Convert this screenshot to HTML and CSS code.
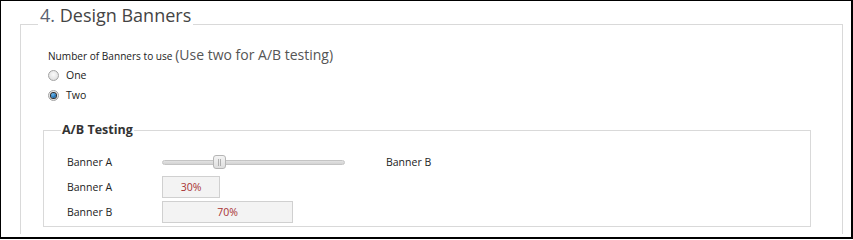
FILE: index.html
```html
<!DOCTYPE html>
<html>
<head>
<meta charset="utf-8">
<link rel="stylesheet" href="styles.css">
</head>
<body>
<div class="frame">
  <div class="viewport">
    <fieldset class="panel">
      <legend class="panel-title"><span class="num">4.</span> Design Banners</legend>
      <div class="options">
        <div class="question">Number of Banners to use <span class="hint">(Use two for A/B testing)</span></div>
        <div class="radio-row"><span class="radio"></span><span class="radio-label">One</span></div>
        <div class="radio-row"><span class="radio checked"></span><span class="radio-label">Two</span></div>
      </div>
      <fieldset class="ab">
        <legend class="ab-title">A/B Testing</legend>
        <div class="row">
          <span class="label">Banner A</span>
          <div class="slider"><div class="track"></div><div class="thumb" style="margin-left: 51px"><i></i><i></i></div></div>
          <span class="label-b">Banner B</span>
        </div>
        <div class="row">
          <span class="label">Banner A</span>
          <div class="box small">30%</div>
        </div>
        <div class="row">
          <span class="label">Banner B</span>
          <div class="box wide">70%</div>
        </div>
      </fieldset>
    </fieldset>
  </div>
</div>
</body>
</html>
```

FILE: styles.css
```css
html, body {
  margin: 0;
  padding: 0;
  background: #fff;
}
.frame {
  width: 853px;
  height: 239px;
  box-sizing: border-box;
  border-style: solid;
  border-color: #000;
  border-width: 1px 2px 2px 1px;
  padding-bottom: 3px;
  background: #fff;
  display: flex;
  flex-direction: column;
  font-family: "Open Sans", "Noto Sans", sans-serif;
  color: #333;
}
.viewport {
  flex: 1;
  overflow: hidden;
}
.panel {
  margin: 4px 0 0 19px;
  width: 823px;
  box-sizing: border-box;
  border: 1px solid #d9d9d9;
  padding: 0 0 40px 17px;
  min-width: 0;
}
.panel-title {
  font-size: 18px;
  line-height: 20px;
  padding: 0 2px 18px 2px;
  color: #444;
}
.panel-title .num {
  color: #5a6070;
}
.options {
  margin-left: 10px;
  padding-top: 3px;
}
.question {
  font-size: 10.1px;
  line-height: 18px;
  color: #222;
}
.hint {
  font-size: 14px;
  color: #555;
}
.radio-row {
  display: flex;
  align-items: center;
  height: 20px;
}
.radio {
  width: 11px;
  height: 11px;
  box-sizing: border-box;
  border-radius: 50%;
  border: 1px solid #a3a3a3;
  background: radial-gradient(circle at 50% 40%, #fafafa 0%, #e6e6e6 60%, #d0d0d0 100%);
  display: flex;
  align-items: center;
  justify-content: center;
}
.radio.checked::after {
  content: "";
  width: 5px;
  height: 5px;
  border-radius: 50%;
  background: radial-gradient(circle at 40% 35%, #6fb9f0 0%, #1e6fb0 60%, #0d3d66 100%);
  box-shadow: 0 0 0 1px #2b2b2b;
}
.radio-label {
  font-size: 10.5px;
  margin-left: 7px;
  color: #222;
}
.ab {
  margin: 17px 0 0 5px;
  width: 768px;
  box-sizing: border-box;
  border: 1px solid #d9d9d9;
  padding: 13px 0 3px 17px;
  min-width: 0;
}
.ab-title {
  font-size: 12.5px;
  font-weight: bold;
  line-height: 16px;
  padding: 0 1px;
  color: #333;
}
.row {
  display: flex;
  align-items: center;
  height: 22px;
  margin-bottom: 3px;
  padding-left: 6px;
}
.row:last-child {
  margin-bottom: 0;
}
.label {
  width: 95px;
  font-size: 10.5px;
  color: #222;
}
.label-b {
  font-size: 10.5px;
  color: #222;
  margin-left: 41px;
}
.slider {
  width: 183px;
  height: 14px;
  display: grid;
  align-items: center;
}
.track {
  grid-area: 1 / 1;
  height: 5px;
  box-sizing: border-box;
  border: 1px solid #c4c4c4;
  border-radius: 3px;
  background: linear-gradient(#e2e2e2, #d3d3d3);
}
.thumb {
  grid-area: 1 / 1;
  width: 13px;
  height: 14px;
  box-sizing: border-box;
  border: 1px solid #b5b5b5;
  border-radius: 3px;
  background: linear-gradient(#f4f4f4, #dedede);
  display: flex;
  justify-content: center;
  align-items: center;
  gap: 1px;
}
.thumb i {
  display: block;
  width: 1px;
  height: 7px;
  background: #b0b0b0;
}
.box {
  height: 22px;
  box-sizing: border-box;
  border: 1px solid #d0d0d0;
  background: #f3f3f3;
  color: #a83232;
  font-size: 10.5px;
  display: flex;
  align-items: center;
  justify-content: center;
}
.box.small {
  width: 58px;
}
.box.wide {
  width: 131px;
}
```
